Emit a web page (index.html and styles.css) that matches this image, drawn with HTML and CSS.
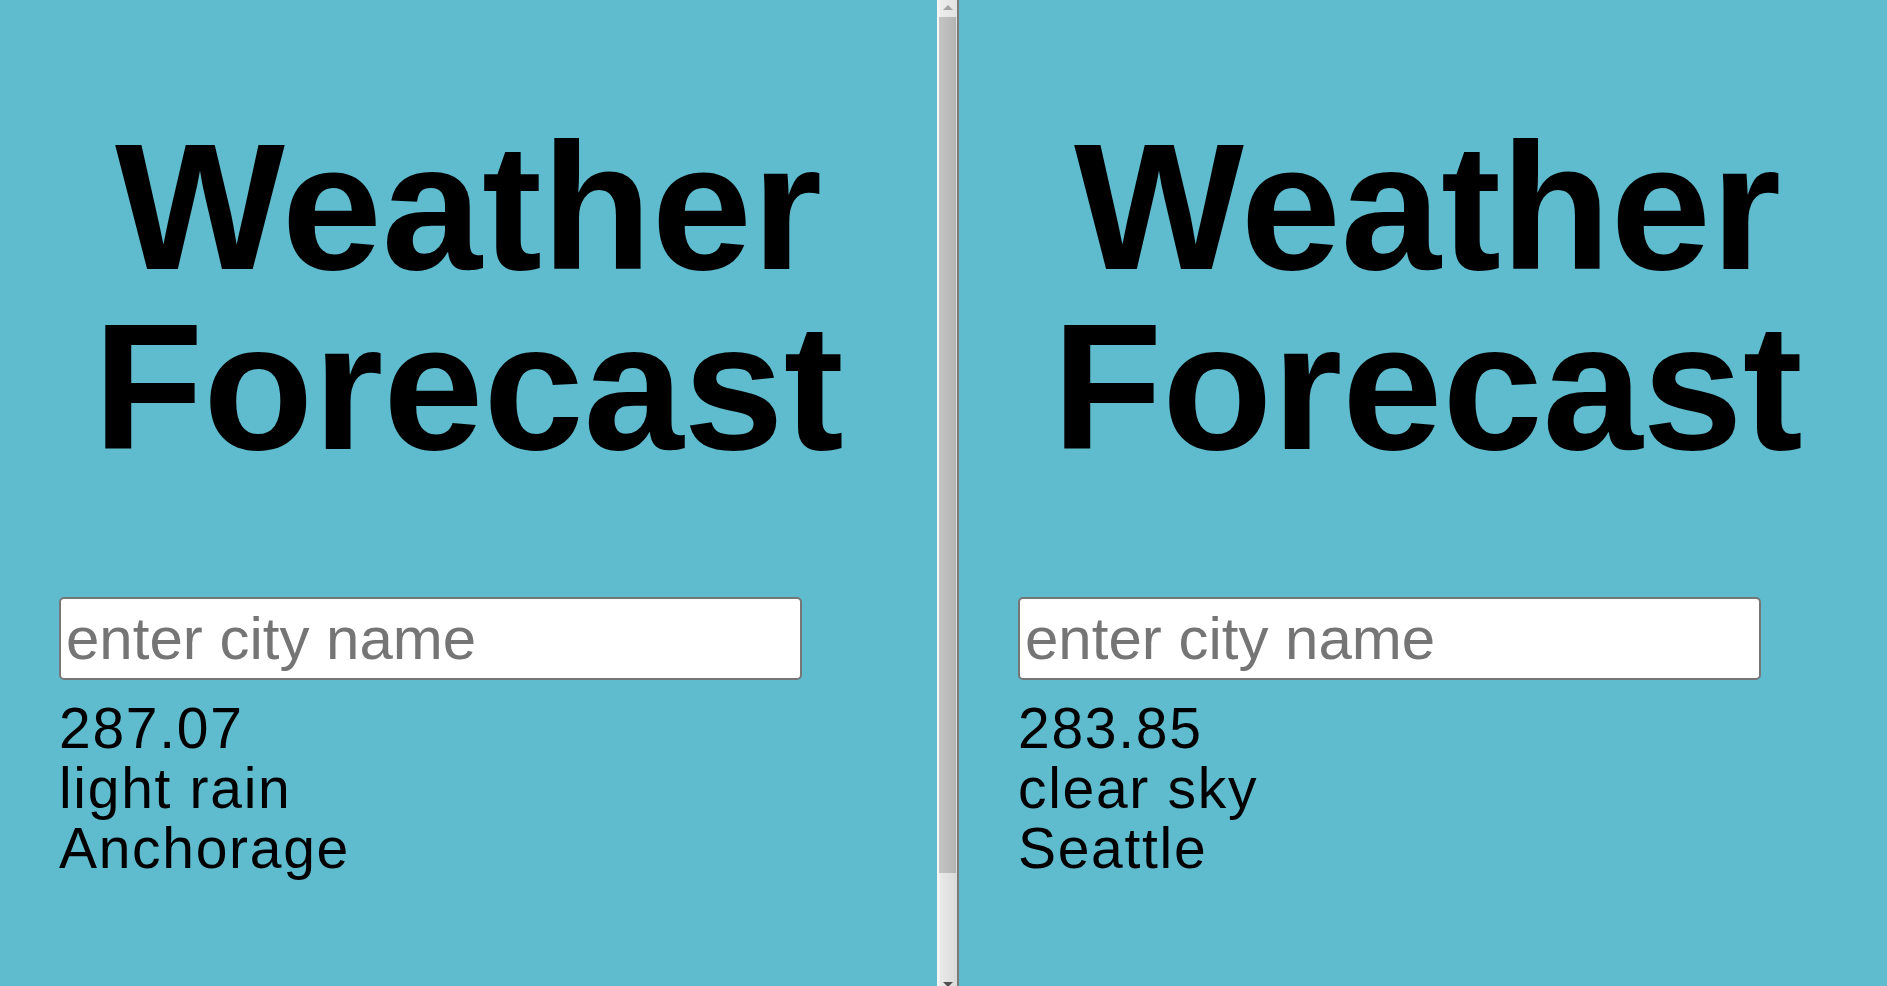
FILE: index.html
```html
<!DOCTYPE html>
<html lang="en">
<head>
<meta charset="utf-8">
<title>Weather Forecast</title>
<link rel="stylesheet" href="styles.css">
</head>
<body>
<div class="screen">
  <section class="pane">
    <h1 class="title">Weather<br>Forecast</h1>
    <input class="city" type="text" placeholder="enter city name">
    <div class="readout">
      <div>287.07</div>
      <div>light rain</div>
      <div>Anchorage</div>
    </div>
  </section>
  <div class="scrollbar">
    <div class="sb-btn sb-up"><span class="arrow-up"></span></div>
    <div class="sb-thumb"></div>
    <div class="sb-fill"></div>
    <div class="sb-btn sb-down"><span class="arrow-down"></span></div>
  </div>
  <div class="divider"></div>
  <section class="pane">
    <h1 class="title">Weather<br>Forecast</h1>
    <input class="city" type="text" placeholder="enter city name">
    <div class="readout">
      <div>283.85</div>
      <div>clear sky</div>
      <div>Seattle</div>
    </div>
  </section>
</div>
</body>
</html>
```

FILE: styles.css
```css
html, body {
  margin: 0;
  padding: 0;
  height: 100%;
  overflow: hidden;
}

body {
  background: #5fbccf;
  font-family: "Liberation Sans", Arial, sans-serif;
  color: #000;
}

.screen {
  display: flex;
  height: 986px;
  width: 1887px;
  overflow: hidden;
}

.pane {
  flex: 0 0 937px;
  width: 937px;
  background: #5fbccf;
  padding-top: 117px;
  box-sizing: border-box;
}

.title {
  margin: 0 0 120px;
  font-family: "Liberation Sans", Arial, sans-serif;
  font-weight: 700;
  font-size: 180px;
  line-height: 180px;
  text-align: center;
}

.city {
  display: block;
  box-sizing: border-box;
  width: 743px;
  height: 83px;
  margin: 0 0 0 59px;
  padding: 0 5px;
  border: 2px solid #767676;
  border-radius: 5px;
  background: #fff;
  font-family: "Liberation Sans", Arial, sans-serif;
  font-size: 60px;
  color: #000;
  outline: none;
}

.city::placeholder {
  color: #757575;
  opacity: 1;
}

.readout {
  margin-top: 18px;
  padding-left: 59px;
  font-size: 57px;
  line-height: 60px;
  letter-spacing: 1.7px;
}

.scrollbar {
  flex: 0 0 20px;
  display: flex;
  flex-direction: column;
  background: linear-gradient(to right, #f6f6f6 0, #f6f6f6 2px, #e9e9e9 3px, #dadada 100%);
}

.sb-btn {
  display: flex;
  justify-content: center;
  flex: 0 0 auto;
}

.sb-up {
  height: 17px;
  padding-top: 5px;
  box-sizing: border-box;
  background: linear-gradient(to right, #f6f6f6 0, #f6f6f6 2px, #ececec 3px, #e2e2e2 100%);
}

.arrow-up {
  width: 0;
  height: 0;
  border-left: 5px solid transparent;
  border-right: 5px solid transparent;
  border-bottom: 5px solid #a3a3a3;
  margin-left: 1px;
}

.sb-thumb {
  height: 856px;
  margin-left: 2px;
  width: 17px;
  background: linear-gradient(to right, #c4c4c4, #b4b4b4);
}

.sb-fill {
  flex: 1;
}

.sb-down {
  height: 12px;
  padding-top: 8px;
  box-sizing: border-box;
}

.arrow-down {
  width: 0;
  height: 0;
  border-left: 5px solid transparent;
  border-right: 5px solid transparent;
  border-top: 5px solid #505050;
  margin-left: 1px;
}

.divider {
  flex: 0 0 2px;
  background: #7b7b7b;
}
```
